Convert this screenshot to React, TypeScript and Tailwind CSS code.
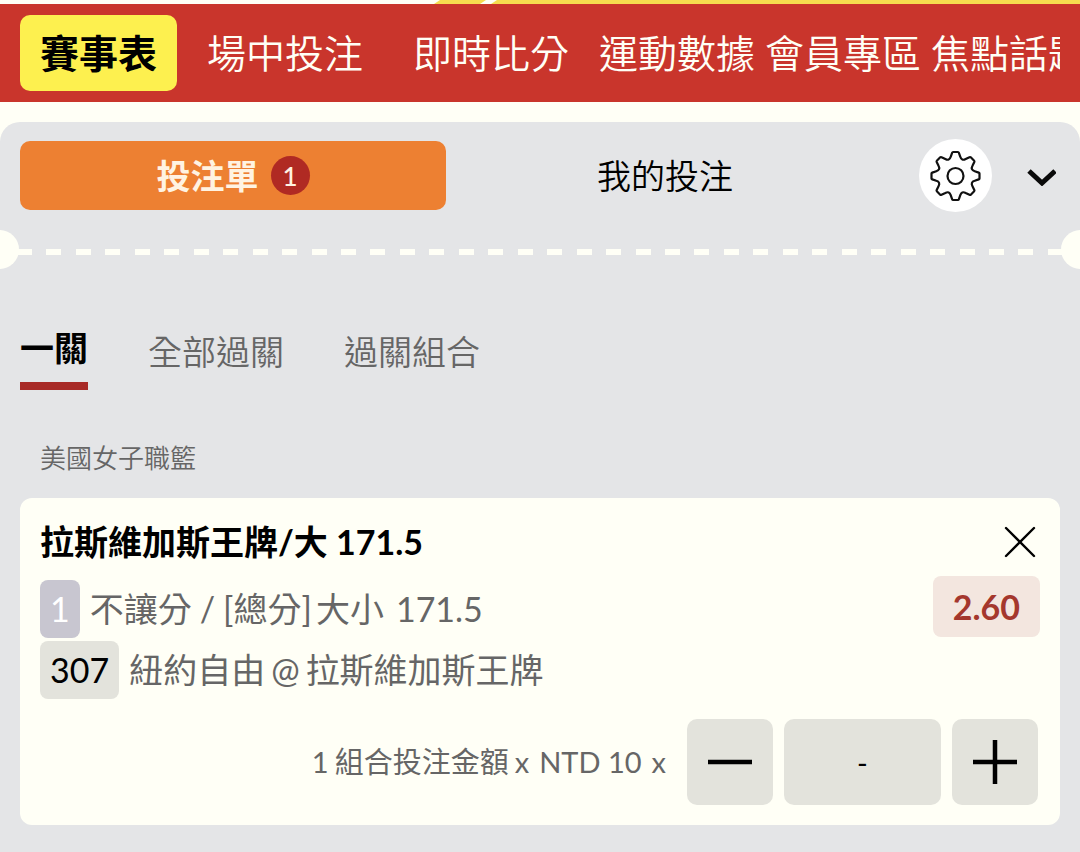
import { useState } from "react";

const paddedNav = ["場中投注", "即時比分"];
const plainNav = ["運動數據", "會員專區", "焦點話題"];
const DASHES = 36;

function buildGearPath(): string {
  const teeth = 8;
  const at = (turn: number, across: number, out: number) => {
    const a = (turn * 2 * Math.PI) / teeth;
    const x = 26 + across * Math.cos(a) + out * Math.sin(a);
    const y = 26 + across * Math.sin(a) - out * Math.cos(a);
    return `${x.toFixed(2)} ${y.toFixed(2)}`;
  };
  let d = "";
  for (let i = 0; i < teeth; i++) {
    d += `${i === 0 ? "M" : "L"}${at(i, -4.8, 19.2)}`;
    d += `L${at(i, -3.4, 23.2)}Q${at(i, -3.1, 24)} ${at(i, -2.4, 24)}`;
    d += `L${at(i, 2.4, 24)}Q${at(i, 3.1, 24)} ${at(i, 3.4, 23.2)}`;
    d += `L${at(i, 4.8, 19.2)}Q${at(i + 0.5, 0, 16)} ${at(i + 1, -4.8, 19.2)}`;
  }
  return d + "Z";
}

const gearPath = buildGearPath();

function GearIcon() {
  return (
    <svg viewBox="0.5 0 52 52" className="size-[52px]" fill="none" stroke="#111" strokeWidth="2.2" aria-hidden="true">
      <path d={gearPath} strokeLinejoin="round" />
      <circle cx="26" cy="26" r="8" />
    </svg>
  );
}

export default function App() {
  const [amount, setAmount] = useState(0);

  return (
    <div className="flex min-h-screen flex-col overflow-hidden bg-[#fffff6] font-['Lato','Noto_Sans_CJK_TC',sans-serif] text-[34px] leading-10 text-black">
      <svg className="h-1 w-full shrink-0" aria-hidden="true">
        <path d="M440 0H486L480 4H434ZM497 0H4000V4H491Z" fill="#f6dc4f" />
      </svg>

      <header className="bg-[#c9352c] px-5">
        <nav className="flex h-[98px] items-center gap-[10px] overflow-hidden text-[39px] whitespace-nowrap text-[#fffff6]">
          <a href="#schedule" className="flex h-[76px] shrink-0 items-center rounded-[10px] bg-[#fdf04f] px-5 font-bold text-black">
            賽事表
          </a>
          {paddedNav.map((label) => (
            <a key={label} href="#live" className="shrink-0 px-5 font-[350]">
              {label}
            </a>
          ))}
          {plainNav.map((label) => (
            <a key={label} href="#more" className="shrink-0 font-[350]">
              {label}
            </a>
          ))}
        </nav>
      </header>

      <main className="mt-5 flex-1 rounded-t-[20px] bg-[#e4e5e7] pb-6">
        <div className="flex items-center pt-[17px] pr-6 pl-5">
          <div className="grid flex-1 grid-cols-2 gap-[6px]">
            <button className="flex h-[69px] items-center justify-center gap-3 rounded-[10px] bg-[#ed8032] font-bold text-[#fff3e2]">
              投注單
              <span className="flex size-[39px] items-center justify-center rounded-full bg-[#b02a23] text-[26px] font-medium">1</span>
            </button>
            <button className="h-[69px] font-[350]">我的投注</button>
          </div>
          <button aria-label="設定" className="ml-[41px] flex size-[73px] items-center justify-center rounded-full bg-white">
            <GearIcon />
          </button>
          <button aria-label="收合" className="ml-[34px]">
            <svg viewBox="0 0 30 20" className="h-5 w-[30px]" fill="none" stroke="#0a0a0a" strokeWidth="5" aria-hidden="true">
              <path d="M3 5L16 17L29 5" />
            </svg>
          </button>
        </div>

        <div className="mt-[18px] flex h-[39px] items-center overflow-hidden" aria-hidden="true">
          <span className="-ml-5 size-[39px] shrink-0 rounded-full bg-[#fffff6]" />
          <span className="-mx-[2px] mt-1 flex flex-1 justify-between">
            {Array.from({ length: DASHES }, (_, i) => (
              <span key={i} className="h-[6px] w-[15px] bg-[#fffff6]" />
            ))}
          </span>
          <span className="-mr-5 size-[39px] shrink-0 rounded-full bg-[#fffff6]" />
        </div>

        <div role="tablist" className="mt-[59px] flex items-start gap-[60px] px-5">
          <button role="tab" aria-selected="true" className="border-b-8 border-[#a82a27] pb-[14px] font-bold">
            一關
          </button>
          <button role="tab" aria-selected="false" className="mt-1 font-[350] text-[#666]">
            全部過關
          </button>
          <button role="tab" aria-selected="false" className="mt-1 font-[350] text-[#666]">
            過關組合
          </button>
        </div>

        <h2 className="mt-12 px-10 text-[26px] font-[350] text-[#666]">美國女子職籃</h2>

        <section className="mx-5 mt-5 rounded-xl bg-[#fffff6] px-5 pt-6 pb-5">
          <div className="flex items-center justify-between">
            <h3 className="font-bold">拉斯維加斯王牌/大 171.5</h3>
            <button aria-label="移除" className="pr-1">
              <svg viewBox="0 0 32 32" className="size-8" fill="none" stroke="#000" strokeWidth="2.4" strokeLinecap="round" aria-hidden="true">
                <path d="M2 2L30 30M30 2L2 30" />
              </svg>
            </button>
          </div>

          <div className="mt-[14px] flex items-start justify-between">
            <div className="mt-1 flex flex-col gap-[3px] font-normal text-[#666]">
              <p className="flex items-center gap-[10px]">
                <span className="flex h-[58px] items-center rounded-lg bg-[#c8c6d0] px-[10px] text-white">1</span>
                <span className="flex gap-2">
                  <span>不讓分</span>
                  <span>/</span>
                  <span className="flex gap-1">
                    <span>[總分]</span>
                    <span>大小</span>
                  </span>
                  <span className="pl-1">171.5</span>
                </span>
              </p>
              <p className="flex items-center gap-[10px]">
                <span className="flex h-[58px] items-center rounded-lg bg-[#e3e3dc] px-[10px] text-black">307</span>
                <span className="flex gap-[6px]">
                  <span>紐約自由</span>
                  <span>@</span>
                  <span>拉斯維加斯王牌</span>
                </span>
              </p>
            </div>
            <span className="flex h-[61px] items-center rounded-lg bg-[#f3e6df] px-5 font-bold text-[#a4372d]">2.60</span>
          </div>

          <div className="mt-5 flex items-center justify-end gap-[11px] pr-[2px]">
            <label htmlFor="stake" className="mr-[10px] flex gap-[10px] text-[29px] font-normal text-[#666]">
              <span className="flex gap-[6px]">
                <span>1</span>
                <span>組合投注金額</span>
                <span>x</span>
              </span>
              <span>NTD 10</span>
              <span>x</span>
            </label>
            <button
              aria-label="減少"
              onClick={() => setAmount(Math.max(0, amount - 1))}
              className="flex size-[86px] items-center justify-center rounded-[10px] bg-[#e3e3dc]"
            >
              <svg viewBox="0 0 44 44" className="size-11" stroke="#000" strokeWidth="4.5" aria-hidden="true">
                <path d="M0 22H44" />
              </svg>
            </button>
            <input
              id="stake"
              readOnly
              value={amount === 0 ? "-" : String(amount)}
              className="h-[86px] w-[157px] rounded-[10px] bg-[#e3e3dc] text-center text-[29px]"
            />
            <button
              aria-label="增加"
              onClick={() => setAmount(amount + 1)}
              className="flex size-[86px] items-center justify-center rounded-[10px] bg-[#e3e3dc]"
            >
              <svg viewBox="0 0 44 44" className="size-11" stroke="#000" strokeWidth="4.5" aria-hidden="true">
                <path d="M0 22H44M22 0V44" />
              </svg>
            </button>
          </div>
        </section>
      </main>
    </div>
  );
}
